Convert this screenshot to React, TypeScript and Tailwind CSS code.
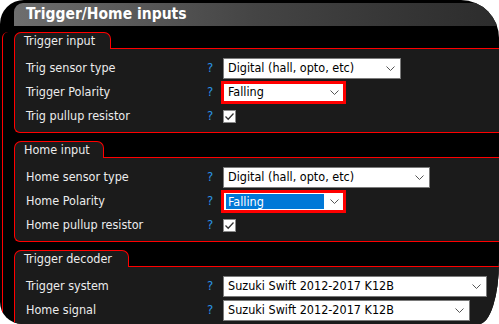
import React from "react"

const font = { fontFamily: '"DejaVu Sans Condensed", "DejaVu Sans", Verdana, sans-serif' }

function Chevron() {
  return (
    <svg width="9" height="5" viewBox="0 0 9 5" className="shrink-0">
      <path d="M0.5 0.5 L4.5 4.5 L8.5 0.5" fill="none" stroke="#555" strokeWidth="1" />
    </svg>
  )
}

function Select({ value, width }: { value: string; width: number }) {
  return (
    <div
      className="h-[21px] bg-white border border-[#7a7a7a] flex items-center pr-[5px] text-black text-[12.5px]"
      style={{ width }}
    >
      <span className="pl-[4px] whitespace-nowrap flex-1">{value}</span>
      <Chevron />
    </div>
  )
}

function RedSelect({ value, highlight }: { value: string; highlight?: boolean }) {
  return (
    <div className="-ml-[2px] w-[125px] h-[23px] border-[3px] border-[#ff0000] bg-white flex items-center pr-[4px] text-[12.5px]">
      {highlight ? (
        <span className="ml-[2px] h-[15px] w-[98px] bg-[#0078d7] text-white pl-[2px] leading-[15px]">{value}</span>
      ) : (
        <span className="pl-[4px] text-black">{value}</span>
      )}
      <span className="flex-1" />
      <Chevron />
    </div>
  )
}

function Checkbox() {
  return (
    <div className="w-[13px] h-[13px] bg-white border border-[#8a8a8a] flex items-center justify-center">
      <svg width="11" height="11" viewBox="0 0 11 11">
        <path d="M1.5 5.5 L4.2 8.2 L9.5 2.5" fill="none" stroke="#333" strokeWidth="1.3" />
      </svg>
    </div>
  )
}

function Row({ label, children }: { label?: string; children: React.ReactNode }) {
  return (
    <div className="h-[24px] flex items-center">
      <div className="w-[181px] text-[12.5px] text-[#ececec] whitespace-nowrap">{label}</div>
      <div className="w-[16px] text-[13px] text-[#2a93e6]">{label ? "?" : ""}</div>
      {children}
    </div>
  )
}

function Section({ title, tabWidth, children }: { title: string; tabWidth: number; children: React.ReactNode }) {
  return (
    <div>
      <div
        className="relative z-10 -mb-px h-[17px] border border-b-0 border-[#ff0000] rounded-t-[7px] bg-[#1b1b1b] pl-[9px] text-[12.5px] leading-[16px] text-[#ececec] whitespace-nowrap"
        style={{ width: tabWidth }}
      >
        {title}
      </div>
      <div className="w-[600px] border border-r-0 border-[#ff0000] rounded-bl-[6px] bg-[#1b1b1b] pl-[11px] pt-[7px] pb-[4px]">
        {children}
      </div>
    </div>
  )
}

export default function App() {
  return (
    <div className="w-[499px] h-[324px] bg-white overflow-hidden" style={font}>
      <div className="w-full h-full bg-black overflow-hidden rounded-tl-[24px] rounded-tr-[38px] rounded-bl-[22px] rounded-br-[20px_62px] pt-[3px]">
        {/* Title bar */}
        <div className="ml-[14px] h-[23px] rounded-tl-[9px] bg-gradient-to-r from-[#6e6e6e] via-[#444] to-[#2c2c2c] flex items-center pl-[12px] text-white font-bold text-[15.5px] whitespace-nowrap">
          Trigger/Home inputs
        </div>

        <div className="mt-[6px] ml-[2px] border-l border-[#ff0000] rounded-tl-[6px] pl-[11px] flex flex-col gap-[8px]">
          <Section title="Trigger input" tabWidth={97}>
            <Row label="Trig sensor type">
              <Select value="Digital (hall, opto, etc)" width={178} />
            </Row>
            <Row label="Trigger Polarity">
              <RedSelect value="Falling" />
            </Row>
            <Row label="Trig pullup resistor">
              <Checkbox />
            </Row>
          </Section>

          <Section title="Home input" tabWidth={90}>
            <Row label="Home sensor type">
              <Select value="Digital (hall, opto, etc)" width={207} />
            </Row>
            <Row label="Home Polarity">
              <RedSelect value="Falling" highlight />
            </Row>
            <Row label="Home pullup resistor">
              <Checkbox />
            </Row>
          </Section>

          <Section title="Trigger decoder" tabWidth={115}>
            <Row label="Trigger system">
              <Select value="Suzuki Swift 2012-2017 K12B" width={264} />
            </Row>
            <Row label="Home signal">
              <Select value="Suzuki Swift 2012-2017 K12B" width={247} />
            </Row>
            <Row>
              <Select value="" width={181} />
            </Row>
          </Section>
        </div>
      </div>
    </div>
  )
}
